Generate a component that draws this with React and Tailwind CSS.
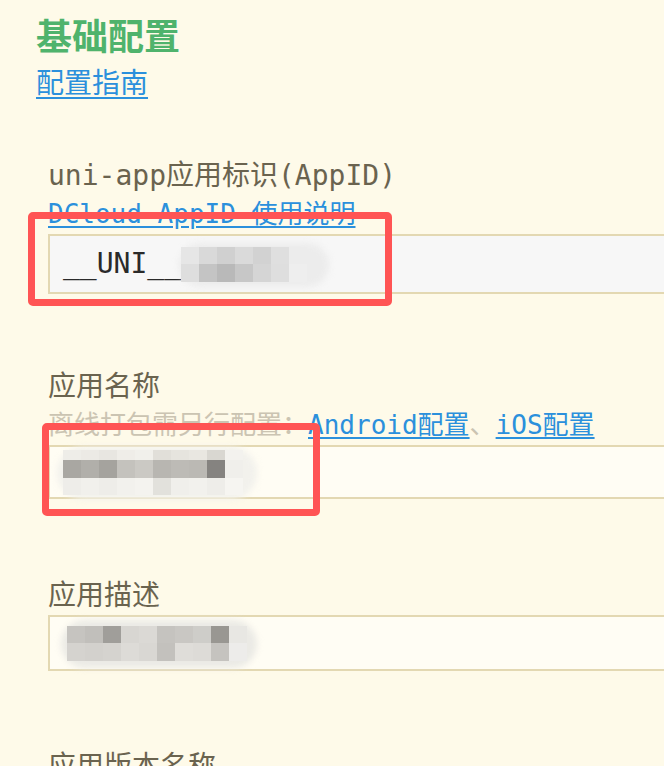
import React from 'react';

// pixelated blur patches that hide private values
const appIdMosaic = [
  ['bg-[#e6e6e6]', 'bg-[#d9d9d9]', 'bg-[#d0d0d0]', 'bg-[#dadada]', 'bg-[#d2d2d2]', 'bg-[#dfdfdf]', 'bg-[#ececec]'],
  ['bg-[#dedede]', 'bg-[#c4c4c4]', 'bg-[#b9b9b9]', 'bg-[#c7c7c7]', 'bg-[#d5d5d5]', 'bg-[#dedede]', 'bg-[#eeeeee]'],
];

const nameMosaic = [
  ['bg-[#eeede8]', 'bg-[#eceae5]', 'bg-[#e8e6e1]', 'bg-[#efede8]', 'bg-[#f1f0eb]', 'bg-[#e1dfd9]', 'bg-[#e6e4de]', 'bg-[#e9e7e1]', 'bg-[#d9d7d1]', 'bg-[#f3f2ee]'],
  ['bg-[#a9a7a2]', 'bg-[#b1afaa]', 'bg-[#a5a39e]', 'bg-[#c4c2bd]', 'bg-[#cbc9c4]', 'bg-[#b8b6b1]', 'bg-[#bdbbb6]', 'bg-[#bbb9b4]', 'bg-[#858380]', 'bg-[#f0efeb]'],
  ['bg-[#eeede9]', 'bg-[#f1f0ec]', 'bg-[#eeede9]', 'bg-[#f2f1ed]', 'bg-[#f4f3ef]', 'bg-[#e2e1dc]', 'bg-[#f0efeb]', 'bg-[#f2f1ed]', 'bg-[#eeede9]', 'bg-[#f6f5f1]'],
];

const descMosaic = [
  ['bg-[#c6c4c0]', 'bg-[#c1bfbb]', 'bg-[#a09e9a]', 'bg-[#d8d6d2]', 'bg-[#dbd9d5]', 'bg-[#c5c3bf]', 'bg-[#c9c7c3]', 'bg-[#cecdc9]', 'bg-[#999792]', 'bg-[#e8e7e3]'],
  ['bg-[#d5d3cf]', 'bg-[#d3d1cd]', 'bg-[#d5d3cf]', 'bg-[#dddbd7]', 'bg-[#d9d7d3]', 'bg-[#c3c1bd]', 'bg-[#dfddd9]', 'bg-[#dddbd7]', 'bg-[#c5c3bf]', 'bg-[#edecea]'],
];

const Mosaic = ({ rows, rowHeights, blob }) => (
  <div className="relative">
    <div className={`absolute rounded-full blur-[3px] ${blob}`}></div>
    <div className="relative flex flex-col">
      {rows.map((row, i) => (
        <div key={i} className={`flex ${rowHeights[i]}`}>
          {row.map((c, j) => (
            <div key={j} className={`w-[18px] h-full ${c}`}></div>
          ))}
        </div>
      ))}
    </div>
  </div>
);

const App = () => {
  return (
    <div className="min-h-screen w-full overflow-hidden bg-[#fefae9] font-['DejaVu_Sans_Mono','Noto_Sans_CJK_SC',monospace]">
      <div className="pl-[36px] pt-[10px]">
        <h1 className="text-[36px] leading-[48px] font-bold text-[#4fb36c] font-['Noto_Sans_CJK_SC',sans-serif]">基础配置</h1>
        <a className="block w-fit text-[28px] leading-[46px] text-[#2b90dc] underline underline-offset-[4px] decoration-[2px] font-['Noto_Sans_CJK_SC',sans-serif]">配置指南</a>
      </div>

      {/* AppID */}
      <div className="relative ml-[48px] mt-[53px]">
        <div className="text-[28px] leading-[38px] text-[#6a634f]">uni-app应用标识(AppID)</div>
        <a className="block w-fit text-[26px] leading-[39px] text-[#2b90dc] underline underline-offset-[3px]">DCloud AppID 使用说明</a>
        <div className="flex h-[60px] w-[660px] items-center border-2 border-[#e3d8b2] bg-[#f7f7f7] pl-[13px]">
          <span className="text-[28px] text-[#2a2a2a]">__UNI__</span>
          <Mosaic rows={appIdMosaic} rowHeights={['h-[17px]', 'h-[18px]']} blob="-left-[2px] -top-[4px] w-[150px] h-[44px] bg-[#ececec]" />
        </div>
        <div className="absolute -left-[20px] top-[55px] h-[94px] w-[364px] rounded-[5px] border-[7px] border-[#ff5454]"></div>
      </div>

      {/* 应用名称 */}
      <div className="relative ml-[48px] mt-[74px]">
        <div className="text-[28px] leading-[38px] text-[#6a634f]">应用名称</div>
        <div className="text-[26px] leading-[39px] text-[#cbc4b2]">
          离线打包需另行配置：<a className="text-[#2b90dc] underline underline-offset-[3px]">Android配置</a>、<a className="text-[#2b90dc] underline underline-offset-[3px]">iOS配置</a>
        </div>
        <div className="flex h-[54px] w-[660px] items-center border-2 border-[#e3d8b2] bg-[#fffdf4] pl-[13px]">
          <Mosaic rows={nameMosaic} rowHeights={['h-[10px]', 'h-[18px]', 'h-[17px]']} blob="-left-[6px] -top-[3px] w-[200px] h-[52px] bg-[#f2f1ec]" />
        </div>
        <div className="absolute -left-[6px] top-[55px] h-[93px] w-[278px] rounded-[5px] border-[7px] border-[#ff5454]"></div>
      </div>

      {/* 应用描述 */}
      <div className="ml-[48px] mt-[78px]">
        <div className="text-[28px] leading-[38px] text-[#6a634f]">应用描述</div>
        <div className="flex h-[56px] w-[660px] items-center border-2 border-[#e3d8b2] bg-[#fffdf4] pl-[17px]">
          <Mosaic rows={descMosaic} rowHeights={['h-[17px]', 'h-[18px]']} blob="-left-[6px] -top-[6px] w-[196px] h-[48px] bg-[#ebeae5]" />
        </div>
      </div>

      {/* 应用版本名称 */}
      <div className="ml-[48px] mt-[77px]">
        <div className="text-[28px] leading-[38px] text-[#6a634f]">应用版本名称</div>
      </div>
    </div>
  );
};

export default App;
